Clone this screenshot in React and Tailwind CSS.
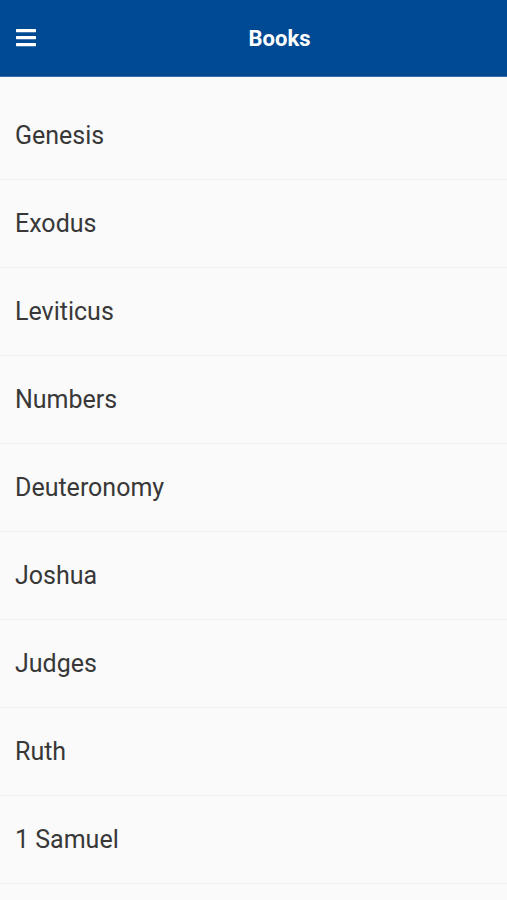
import React from "react";

const books = ["Genesis", "Exodus", "Leviticus", "Numbers", "Deuteronomy", "Joshua", "Judges", "Ruth", "1 Samuel"];

export default function App() {
  return (
    <div className="h-[900px] w-full overflow-hidden bg-[#fafafa]" style={{ fontFamily: "Roboto, 'Noto Sans', sans-serif" }}>
      <header className="flex h-[77px] items-center border-b border-[#3a6db0] bg-[#004a94]">
        <button className="flex h-full w-[52px] items-center justify-center">
          <svg width="20" height="19" viewBox="0 0 20 19">
            <rect x="0" y="0" width="20" height="3.2" rx="0.6" fill="#fff" />
            <rect x="0" y="7" width="20" height="3.2" rx="0.6" fill="#fff" />
            <rect x="0" y="14" width="20" height="3.2" rx="0.6" fill="#fff" />
          </svg>
        </button>
        <h1 className="flex-1 pt-[1px] text-center text-[22px] font-bold text-white">Books</h1>
      </header>
      <ul className="pt-[15px]">
        {books.map((b) => (
          <li key={b} className="flex h-[88px] items-center border-b border-[#eeeef3] pl-[15px] text-[25px] text-[#383838]">
            {b}
          </li>
        ))}
      </ul>
    </div>
  );
}
